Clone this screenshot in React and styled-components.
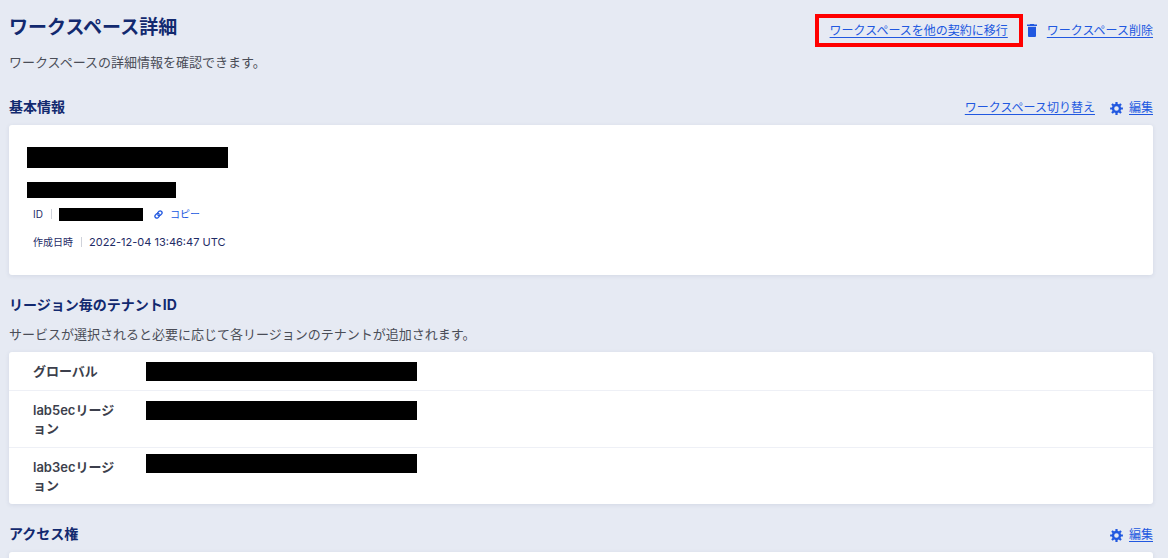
import React from 'react';
import styled, { createGlobalStyle } from 'styled-components';

const theme = {
  colors: {
    page: '#e6eaf3',
    card: '#ffffff',
    heading: '#12296f',
    text: '#4a4d57',
    label: '#3c3f4c',
    meta: '#1e2b66',
    link: '#2158e0',
    border: '#eef0f6',
    divider: '#cfd2da',
    marker: '#ff0000',
  },
  fonts: {
    body: "Inter, 'Noto Sans CJK JP', sans-serif",
  },
};

const GlobalStyle = createGlobalStyle`
  * {
    box-sizing: border-box;
  }

  body {
    margin: 0;
    background: ${theme.colors.page};
    color: ${theme.colors.text};
    font-family: ${theme.fonts.body};
    font-size: 12px;
    line-height: 18px;
  }
`;

const Page = styled.main`
  padding: 14px 15px 0 9px;
`;

const PageHeader = styled.header`
  display: flex;
  align-items: flex-start;
  justify-content: space-between;
`;

const PageTitle = styled.h1`
  margin: 0;
  color: ${theme.colors.heading};
  font-size: 19px;
  font-weight: 700;
  line-height: 28px;
`;

const Lead = styled.p`
  margin: ${props => props.$top}px 0 ${props => props.$bottom || 0}px;
  font-size: 13px;
`;

const Actions = styled.div`
  display: flex;
  align-items: center;
  gap: ${props => props.$gap || 15}px;
`;

const TextLink = styled.a`
  color: ${theme.colors.link};
  text-decoration: underline;
  text-underline-offset: 2px;
`;

const MarkedLink = styled(TextLink)`
  padding: 3px 11px;
  border: 4px solid ${theme.colors.marker};
  line-height: 19px;
`;

const IconAction = styled.span`
  display: flex;
  align-items: center;
  gap: ${props => props.$gap || 6}px;
  color: ${theme.colors.link};
`;

const Icon = styled.svg`
  display: block;
  flex: none;
`;

const Section = styled.section`
  margin-top: ${props => props.$top}px;
`;

const SectionHeader = styled.div`
  display: flex;
  align-items: flex-end;
  justify-content: space-between;
  margin-bottom: 8px;
`;

const SectionTitle = styled.h2`
  margin: 0;
  color: ${theme.colors.heading};
  font-size: 14px;
  font-weight: 700;
  line-height: 20px;
`;

const Card = styled.div`
  overflow: hidden;
  border-radius: 3px;
  background: ${theme.colors.card};
  box-shadow: 0 1px 4px rgba(40, 60, 110, 0.1);
`;

const InfoBody = styled.div`
  padding: 22px 18px 24px;
`;

const Redacted = styled.div`
  width: ${props => props.$width}px;
  height: ${props => props.$height}px;
  margin-bottom: ${props => props.$bottom || 0}px;
  background: #000000;
`;

const MetaList = styled.dl`
  display: grid;
  gap: 10px;
  margin: 0 6px;
  color: ${theme.colors.meta};
  font-size: 10px;
`;

const MetaRow = styled.div`
  display: flex;
  align-items: center;
`;

const MetaLabel = styled.dt`
  display: flex;
  align-items: center;

  &::after {
    content: '';
    width: 1px;
    height: 10px;
    margin: 0 7px 0 8px;
    background: ${theme.colors.divider};
  }
`;

const MetaValue = styled.dd`
  display: flex;
  align-items: center;
  gap: 11px;
  margin: 0;
  font-size: 11px;
`;

const CopyButton = styled.button`
  display: flex;
  align-items: center;
  gap: 7px;
  padding: 0;
  border: 0;
  background: none;
  color: ${theme.colors.link};
  font: inherit;
  font-size: 10px;
  cursor: pointer;
`;

const TenantTable = styled.table`
  width: 100%;
  border-collapse: separate;
  border-spacing: 0;
  table-layout: fixed;

  tr + tr > * {
    border-top: 1px solid ${theme.colors.border};
  }
`;

const TenantName = styled.th`
  width: 137px;
  padding: 10px 24px;
  color: ${theme.colors.label};
  font-size: 13px;
  font-weight: 600;
  line-height: 18px;
  text-align: left;
`;

const TenantId = styled.td`
  padding: ${props => props.$top}px 0 0;
  vertical-align: top;
`;

const AccessBody = styled.div`
  height: 40px;
`;

function TrashIcon() {
  return (
    <Icon width="10" height="13" viewBox="0 0 10 13" fill="currentColor" aria-hidden="true">
      <path d="M3.2 0h3.6l.6.6H10v1.500H0V.6h2.600zM1 2.800h8v8.900c0 .8-.5 1.300-1.300 1.300H2.300C1.500 13 1 12.500 1 11.700z" />
    </Icon>
  );
}

function GearIcon() {
  return (
    <Icon width="13" height="13" viewBox="-6.5 -6.5 13 13" fill="none" stroke="currentColor" aria-hidden="true">
      <circle r="3.5" strokeWidth="2.4" />
      {[0, 45, 90, 135].map(angle => (
        <path key={angle} d="M0-6.4v2.200M0 6.4v-2.200" strokeWidth="2.2" transform={`rotate(${angle})`} />
      ))}
    </Icon>
  );
}

function ChainIcon() {
  return (
    <Icon width="9" height="9" viewBox="0 0 24 24" fill="none" stroke="currentColor" strokeWidth="3.5" strokeLinecap="round" aria-hidden="true">
      <path d="M10 13a5 5 0 0 0 7.5.5l3-3a5 5 0 0 0-7-7l-3.500 3.500" />
      <path d="M14 11a5 5 0 0 0-7.5-.5l-3 3a5 5 0 0 0 7 7l3.500-3.500" />
    </Icon>
  );
}

const tenants = [
  { name: 'グローバル', top: 10 },
  { name: 'lab5ecリージョン', top: 10 },
  { name: 'lab3ecリージョン', top: 6 },
];

function App() {
  return (
    <>
      <GlobalStyle />
      <Page>
        <PageHeader>
          <PageTitle>ワークスペース詳細</PageTitle>
          <Actions $gap={4}>
            <MarkedLink href="#transfer">ワークスペースを他の契約に移行</MarkedLink>
            <IconAction $gap={10}>
              <TrashIcon />
              <TextLink href="#delete">ワークスペース削除</TextLink>
            </IconAction>
          </Actions>
        </PageHeader>
        <Lead $top={6}>ワークスペースの詳細情報を確認できます。</Lead>

        <Section $top={26}>
          <SectionHeader>
            <SectionTitle>基本情報</SectionTitle>
            <Actions>
              <TextLink href="#switch">ワークスペース切り替え</TextLink>
              <IconAction>
                <GearIcon />
                <TextLink href="#edit">編集</TextLink>
              </IconAction>
            </Actions>
          </SectionHeader>
          <Card>
            <InfoBody>
              <Redacted $width={201} $height={21} $bottom={14} />
              <Redacted $width={149} $height={16} $bottom={7} />
              <MetaList>
                <MetaRow>
                  <MetaLabel>ID</MetaLabel>
                  <MetaValue>
                    <Redacted $width={84} $height={13} />
                    <CopyButton type="button">
                      <ChainIcon />
                      コピー
                    </CopyButton>
                  </MetaValue>
                </MetaRow>
                <MetaRow>
                  <MetaLabel>作成日時</MetaLabel>
                  <MetaValue>2022-12-04 13:46:47 UTC</MetaValue>
                </MetaRow>
              </MetaList>
            </InfoBody>
          </Card>
        </Section>

        <Section $top={20}>
          <SectionTitle>リージョン毎のテナントID</SectionTitle>
          <Lead $top={10} $bottom={9}>サービスが選択されると必要に応じて各リージョンのテナントが追加されます。</Lead>
          <Card>
            <TenantTable>
              <tbody>
                {tenants.map(tenant => (
                  <tr key={tenant.name}>
                    <TenantName scope="row">{tenant.name}</TenantName>
                    <TenantId $top={tenant.top}>
                      <Redacted $width={271} $height={19} />
                    </TenantId>
                  </tr>
                ))}
              </tbody>
            </TenantTable>
          </Card>
        </Section>

        <Section $top={20}>
          <SectionHeader>
            <SectionTitle>アクセス権</SectionTitle>
            <IconAction>
              <GearIcon />
              <TextLink href="#access">編集</TextLink>
            </IconAction>
          </SectionHeader>
          <Card>
            <AccessBody />
          </Card>
        </Section>
      </Page>
    </>
  );
}

export default App;
